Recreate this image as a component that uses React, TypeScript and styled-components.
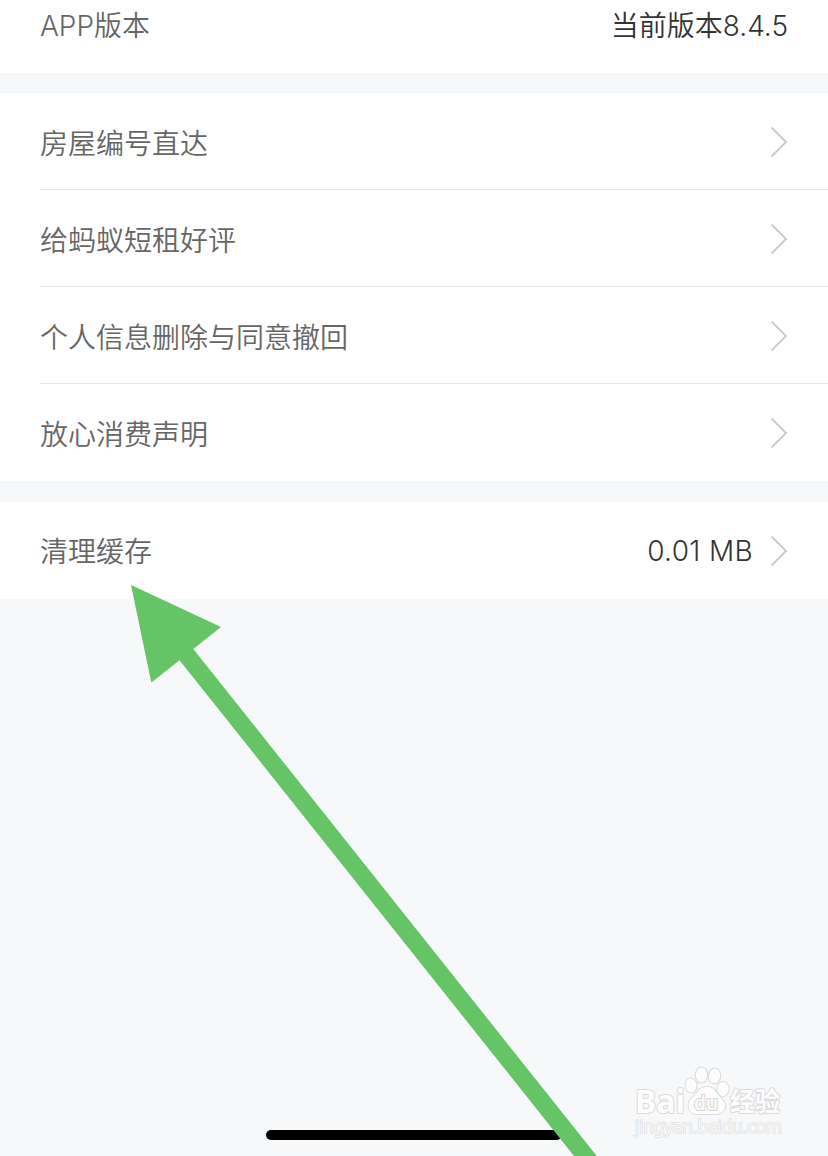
import React from "react";
import styled, { createGlobalStyle } from "styled-components";

const GlobalStyle = createGlobalStyle`
  * { box-sizing: border-box; }
  html, body { margin: 0; background: #f6f8fa; }
  body { overflow: hidden; }
`;

const Screen = styled.main`
  position: relative;
  width: 828px;
  height: 1156px;
  overflow: hidden;
  background: #f6f8fa;
  font-family: Inter, "Noto Sans CJK SC", sans-serif;
  font-size: 28px;
  font-weight: 360;
`;

const Groups = styled.div`
  display: flex;
  flex-direction: column;
  margin-top: -24px;
`;

const Group = styled.section<{ $gap?: number }>`
  margin-top: ${(p) => p.$gap ?? 0}px;
  padding-left: 40px;
  background: #fff;
`;

const Row = styled.div`
  display: flex;
  align-items: center;
  height: 97px;
  padding-right: 40px;
  border-bottom: 1px solid #e6e6e6;
  &:last-child { border-bottom-color: transparent; }
`;

const Label = styled.span<{ $top?: number }>`
  flex: 1;
  line-height: 40px;
  padding-top: ${(p) => p.$top ?? 4}px;
  color: #666;
`;

const Value = styled.span<{ $top?: number; $spacing?: number }>`
  line-height: 40px;
  padding-top: ${(p) => p.$top ?? 4}px;
  letter-spacing: ${(p) => p.$spacing ?? 0}px;
  color: #333;
`;

const ChevronIcon = styled.svg`
  display: block;
  width: 18px;
  height: 32px;
  margin-left: 17px;
  margin-top: 1px;
`;

const Overlay = styled.svg`
  position: absolute;
  inset: 0;
  pointer-events: none;
`;

const HomeIndicator = styled.div`
  position: absolute;
  left: 266px;
  top: 1130px;
  width: 296px;
  height: 10px;
  border-radius: 5px;
  background: #000;
`;

const Watermark = styled.svg`
  position: absolute;
  left: 620px;
  top: 1055px;
`;

const Chevron = () => (
  <ChevronIcon viewBox="0 0 18 32" fill="none">
    <path d="M1.5 1.5L16 16L1.5 30.5" stroke="#cbcbcb" strokeWidth="2" />
  </ChevronIcon>
);

const links = ["房屋编号直达", "给蚂蚁短租好评", "个人信息删除与同意撤回", "放心消费声明"];

export default function App() {
  return (
    <Screen>
      <GlobalStyle />
      <Groups>
        <Group>
          <Row>
            <Label>APP版本</Label>
            <Value>当前版本8.4.5</Value>
          </Row>
        </Group>
        <Group $gap={20}>
          {links.map((text) => (
            <Row key={text}>
              <Label $top={6}>{text}</Label>
              <Chevron />
            </Row>
          ))}
        </Group>
        <Group $gap={21}>
          <Row>
            <Label>清理缓存</Label>
            <Value $top={2} $spacing={0.35}>0.01 MB</Value>
            <Chevron />
          </Row>
        </Group>
      </Groups>
      <HomeIndicator />
      <Watermark width="180" height="95" viewBox="0 0 180 95">
        <g fill="#fdfdfd" stroke="#d9dadc" strokeWidth="2" paintOrder="stroke" strokeLinejoin="round">
          <text x="15" y="58" fontFamily="'Noto Sans', sans-serif" fontWeight="700" fontSize="33" textLength="50" lengthAdjust="spacingAndGlyphs">Bai</text>
          <ellipse cx="71" cy="30.5" rx="5.5" ry="7" transform="rotate(-8 71 30.5)" />
          <ellipse cx="81.5" cy="20" rx="5.7" ry="7.5" />
          <ellipse cx="94.5" cy="21" rx="5.7" ry="7.3" transform="rotate(8 94.5 21)" />
          <ellipse cx="103" cy="34" rx="5.6" ry="7" transform="rotate(8 103 34)" />
          <path d="M87 32C79 32 77 38 73 42C68 46 68 50 69 54C71 59 75 59 79 59H95C100 59 103 57 105 53C106 48 103 45 100 42C96 37 94 32 87 32Z" />
          <text x="110" y="56" fontFamily="'Noto Sans CJK SC', sans-serif" fontWeight="700" fontSize="26" textLength="50" lengthAdjust="spacingAndGlyphs">经验</text>
        </g>
        <text x="15" y="78" fill="#fafbfb" stroke="#dfe0e2" strokeWidth="1.6" paintOrder="stroke" fontFamily="'Noto Sans', sans-serif" fontSize="17.5" textLength="147" lengthAdjust="spacingAndGlyphs">jingyan.baidu.com</text>
        <text x="74" y="55" fill="#f8f9fa" stroke="#d5d6d8" strokeWidth="2" paintOrder="stroke" fontFamily="'Noto Sans', sans-serif" fontWeight="600" fontSize="20" textLength="24" lengthAdjust="spacingAndGlyphs">du</text>
      </Watermark>
      <Overlay width="828" height="1156" viewBox="0 0 828 1156">
        <path d="M131 585L221 627L193.3 649L596.8 1156H574L179.5 660.2L151.3 682.5Z" fill="#65c466" />
      </Overlay>
    </Screen>
  );
}
